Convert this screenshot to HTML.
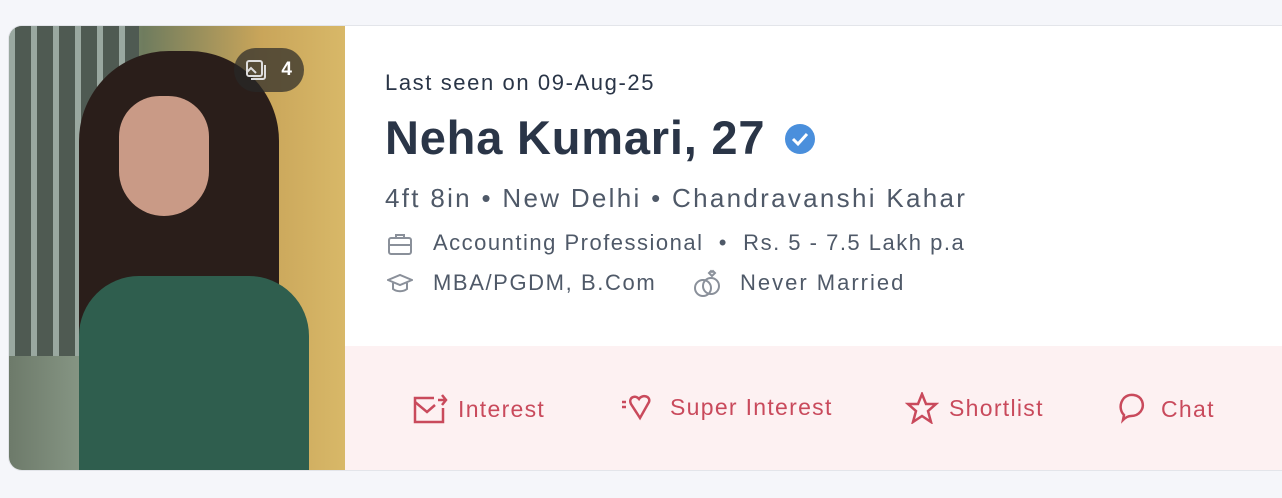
<!DOCTYPE html>
<html><head><style>
body{margin:0;background:#f5f6fa;width:1282px;height:498px;overflow:hidden;font-family:"Liberation Sans",sans-serif}
.card{position:absolute;left:8px;top:25px;width:1290px;height:444px;background:#fff;border:1px solid #e3e5ea;border-radius:14px;overflow:hidden}
.photo{position:absolute;left:0;top:0;width:336px;height:444px;background:linear-gradient(90deg,#6d7a6a 0%,#8a9a88 25%,#6f7c5e 40%,#c9a55a 75%,#d8b868 100%)}
.t{position:absolute;color:#2a3547;white-space:nowrap}
.g{color:#4f5968}
.act{position:absolute;top:320px;left:336px;right:0;height:124px;background:#fdf1f2}
.a{position:absolute;top:392px;color:#c94a5c;font-size:23px;letter-spacing:1.3px;display:flex;align-items:center;gap:10px}
</style></head><body>
<div class="card">
<div class="photo">
<div style="position:absolute;left:0;top:0;width:130px;height:330px;background:repeating-linear-gradient(90deg,#9aa8a0 0 6px,#4f5a52 6px 22px)"></div>
<div style="position:absolute;left:70px;top:25px;width:200px;height:420px;background:#2a1e1a;border-radius:90px 90px 20px 20px"></div>
<div style="position:absolute;left:110px;top:70px;width:90px;height:120px;background:#c99a86;border-radius:45px 45px 50px 50px"></div>
<div style="position:absolute;left:70px;top:250px;width:230px;height:194px;background:#2f5e4e;border-radius:60px 60px 0 0"></div>
<div style="position:absolute;left:225px;top:22px;width:70px;height:44px;background:rgba(40,40,40,.7);border-radius:22px;color:#fff;font-weight:bold;font-size:19px;line-height:44px;text-align:right;padding-right:12px;box-sizing:border-box">
<svg style="position:absolute;left:10px;top:10px" width="24" height="24" viewBox="0 0 24 24" fill="none" stroke="#ddd" stroke-width="2"><rect x="3" y="3" width="15" height="15" rx="2"/><path d="M3 14l4-4 5 5M21 7v12a2 2 0 0 1-2 2H7"/></svg>4</div>
</div>
<div class="t" style="left:376px;top:44px;font-size:22px;letter-spacing:1.6px">Last seen on 09-Aug-25</div>
<div class="t" style="left:376px;top:84px;font-size:47px;font-weight:bold;letter-spacing:0.8px">Neha Kumari, 27
<svg width="34" height="34" viewBox="0 0 34 34" style="vertical-align:-2px;margin-left:4px"><circle cx="17" cy="17" r="15" fill="#4a8fdc"/><path d="M10 17l5 5 9-10" stroke="#fff" stroke-width="3" fill="none"/></svg></div>
<div class="t g" style="left:376px;top:157px;font-size:26px;letter-spacing:2.3px">4ft 8in • New Delhi • Chandravanshi Kahar</div>
<svg style="position:absolute;left:378px;top:206px" width="26" height="24" viewBox="0 0 26 24" fill="none" stroke="#8a909a" stroke-width="2"><rect x="2" y="6" width="22" height="16" rx="2"/><path d="M9 6V3h8v3M2 13h22"/></svg>
<div class="t g" style="left:424px;top:204px;font-size:22px;letter-spacing:1.5px">Accounting Professional &nbsp;• &nbsp;Rs. 5 - 7.5 Lakh p.a</div>
<svg style="position:absolute;left:378px;top:246px" width="26" height="22" viewBox="0 0 26 22" fill="none" stroke="#8a909a" stroke-width="2"><path d="M1 8l12-5 12 5-12 5z"/><path d="M6 11v6c4 3 10 3 14 0v-6"/></svg>
<div class="t g" style="left:424px;top:244px;font-size:22px;letter-spacing:1.6px">MBA/PGDM, B.Com</div>
<svg style="position:absolute;left:683px;top:242px" width="32" height="32" viewBox="0 0 32 32" fill="none" stroke="#8a909a" stroke-width="2"><circle cx="11" cy="20" r="8"/><circle cx="19" cy="18" r="8"/><path d="M20 8l-3-3 2-2 1 1 1-1 2 2z"/></svg>
<div class="t g" style="left:731px;top:244px;font-size:22px;letter-spacing:2px">Never Married</div>
<div class="act"></div>
</div>
<div class="a" style="left:412px"><svg width="36" height="34" viewBox="0 0 36 34" fill="none" stroke="#c94a5c" stroke-width="2.5"><path d="M22 6H3v24h28V16"/><path d="M3 10l12 10 8-7M26 8h8M30 3l4 5-4 5"/></svg>Interest</div>
<div class="a" style="left:620px"><svg width="40" height="30" viewBox="0 0 40 30" fill="none" stroke="#c94a5c" stroke-width="2.5"><path d="M2 10h4M2 15h4"/><path d="M20 26L11 12c-3-6 4-10 8-5 3-5 12-3 10 3z"/></svg>Super Interest</div>
<div class="a" style="left:905px"><svg width="34" height="32" viewBox="0 0 34 32" fill="none" stroke="#c94a5c" stroke-width="2.5"><path d="M17 2l4 10h10l-8 7 3 11-9-6-9 6 3-11-8-7h10z"/></svg>Shortlist</div>
<div class="a" style="left:1117px"><svg width="34" height="34" viewBox="0 0 34 34" fill="none" stroke="#c94a5c" stroke-width="2.5"><path d="M6 28l1-5C3 19 2 12 7 6c5-5 15-4 18 3 3 8-3 15-11 15-3 0-5 1-8 4z"/></svg>Chat</div>
</body></html>
